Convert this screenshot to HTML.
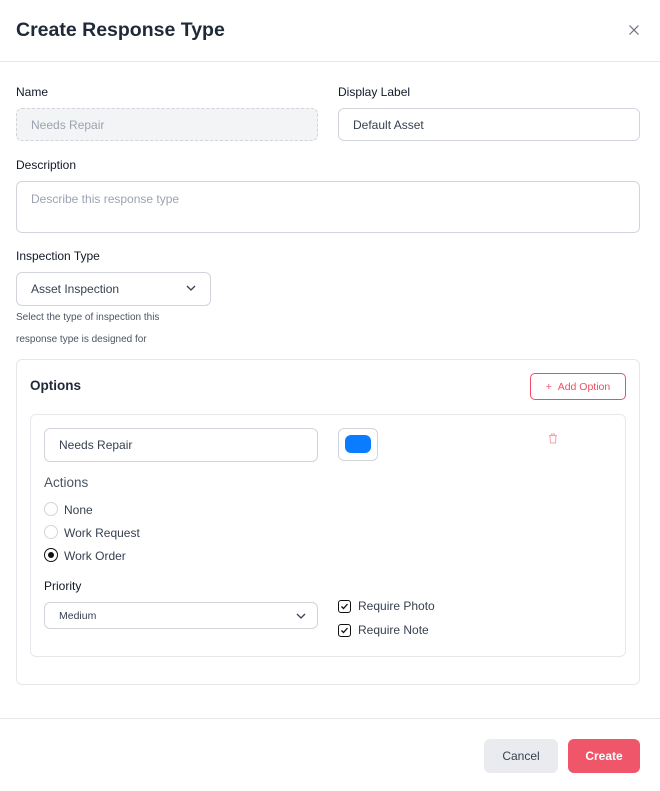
<!DOCTYPE html>
<html><head><style>
*{box-sizing:border-box;margin:0;padding:0}
body{width:660px;height:791px;background:#fff;font-family:"Liberation Sans",sans-serif;color:#111827;position:relative;overflow:hidden}
.a{position:absolute}
.lbl{font-size:12px;color:#111827}
.inp{position:absolute;border:1px solid #d1d5db;border-radius:6px;font-size:12px;color:#374151;padding-left:14px;display:flex;align-items:center}
.radio{position:absolute;width:14px;height:14px;border:1px solid #d1d5db;border-radius:50%}
.cb{position:absolute;width:13px;height:13px;border:1.5px solid #111;border-radius:3px}
</style></head><body>
<div class="a" style="left:16px;top:19px;font-size:19.5px;font-weight:bold;color:#1f2937">Create Response Type</div>
<svg class="a" style="left:629px;top:25px" width="10" height="10" viewBox="0 0 10 10"><path d="M0.5 0.5L9.5 9.5M9.5 0.5L0.5 9.5" stroke="#6b7280" stroke-width="1.2"/></svg>
<div class="a" style="left:0;top:61px;width:660px;height:1px;background:#e5e7eb"></div>

<div class="a lbl" style="left:16px;top:85px">Name</div>
<div class="a lbl" style="left:338px;top:85px">Display Label</div>
<div class="inp" style="left:16px;top:108px;width:302px;height:33px;background:#f3f4f6;border:1px dashed #d1d5db;color:#9ca3af">Needs Repair</div>
<div class="inp" style="left:338px;top:108px;width:302px;height:33px">Default Asset</div>
<div class="a lbl" style="left:16px;top:158px">Description</div>
<div class="inp" style="left:16px;top:181px;width:624px;height:52px;align-items:flex-start;padding-top:10px;color:#9ca3af">Describe this response type</div>
<div class="a lbl" style="left:16px;top:249px">Inspection Type</div>
<div class="inp" style="left:16px;top:272px;width:195px;height:34px">Asset Inspection
<svg class="a" style="left:169px;top:12px" width="10" height="7" viewBox="0 0 10 7"><path d="M1 1L5 5L9 1" stroke="#374151" stroke-width="1.3" fill="none"/></svg></div>
<div class="a" style="left:16px;top:307px;font-size:10px;color:#4b5563;line-height:22px">Select the type of inspection this<br>response type is designed for</div>

<div class="a" style="left:16px;top:359px;width:624px;height:326px;border:1px solid #e5e7eb;border-radius:6px"></div>
<div class="a" style="left:30px;top:378px;font-size:13.5px;font-weight:bold;color:#1f2937">Options</div>
<div class="a" style="left:530px;top:373px;width:96px;height:27px;border:1px solid #ef4e63;border-radius:5px;color:#ef4e63;font-size:10.5px;display:flex;align-items:center;justify-content:center">+&nbsp;&nbsp;Add Option</div>
<div class="a" style="left:30px;top:414px;width:596px;height:243px;border:1px solid #e5e7eb;border-radius:6px"></div>
<div class="inp" style="left:44px;top:428px;width:274px;height:34px">Needs Repair</div>
<div class="a" style="left:338px;top:428px;width:40px;height:33px;border:1px solid #d1d5db;border-radius:6px"></div>
<div class="a" style="left:345px;top:435px;width:26px;height:18px;background:#0a7cff;border-radius:6px"></div>
<svg class="a" style="left:548px;top:433px" width="10" height="11" viewBox="0 0 10 11"><path d="M1 2.5H9M3.5 2.5V1H6.5V2.5M2 2.5L2.5 10H7.5L8 2.5" stroke="#f3a3ad" stroke-width="1" fill="none"/></svg>
<div class="a" style="left:44px;top:475px;font-size:13.5px;color:#4b5563">Actions</div>
<div class="radio" style="left:44px;top:502px"></div><div class="a" style="left:64px;top:503px;font-size:12px;color:#374151">None</div>
<div class="radio" style="left:44px;top:525px"></div><div class="a" style="left:64px;top:526px;font-size:12px;color:#374151">Work Request</div>
<div class="radio" style="left:44px;top:548px;border:1.5px solid #111"></div><div class="a" style="left:48px;top:552px;width:6px;height:6px;border-radius:50%;background:#111"></div><div class="a" style="left:64px;top:549px;font-size:12px;color:#374151">Work Order</div>
<div class="a lbl" style="left:44px;top:579px">Priority</div>
<div class="inp" style="left:44px;top:602px;width:274px;height:27px;font-size:10.5px">Medium
<svg class="a" style="left:251px;top:10px" width="10" height="7" viewBox="0 0 10 7"><path d="M1 1L5 5L9 1" stroke="#374151" stroke-width="1.3" fill="none"/></svg></div>
<div class="cb" style="left:338px;top:600px"></div><svg class="a" style="left:340px;top:602px" width="9" height="9" viewBox="0 0 9 9"><path d="M1.5 4.5L3.5 6.5L7.5 2" stroke="#111" stroke-width="1.3" fill="none"/></svg>
<div class="a" style="left:358px;top:599px;font-size:12px;color:#374151">Require Photo</div>
<div class="cb" style="left:338px;top:624px"></div><svg class="a" style="left:340px;top:626px" width="9" height="9" viewBox="0 0 9 9"><path d="M1.5 4.5L3.5 6.5L7.5 2" stroke="#111" stroke-width="1.3" fill="none"/></svg>
<div class="a" style="left:358px;top:623px;font-size:12px;color:#374151">Require Note</div>

<div class="a" style="left:0;top:718px;width:660px;height:1px;background:#e5e7eb"></div>
<div class="a" style="left:484px;top:739px;width:74px;height:34px;background:#e9ebef;border-radius:6px;font-size:12px;color:#374151;display:flex;align-items:center;justify-content:center">Cancel</div>
<div class="a" style="left:568px;top:739px;width:72px;height:34px;background:#f0566a;border-radius:6px;font-size:12px;color:#fff;font-weight:bold;display:flex;align-items:center;justify-content:center">Create</div>
</body></html>
